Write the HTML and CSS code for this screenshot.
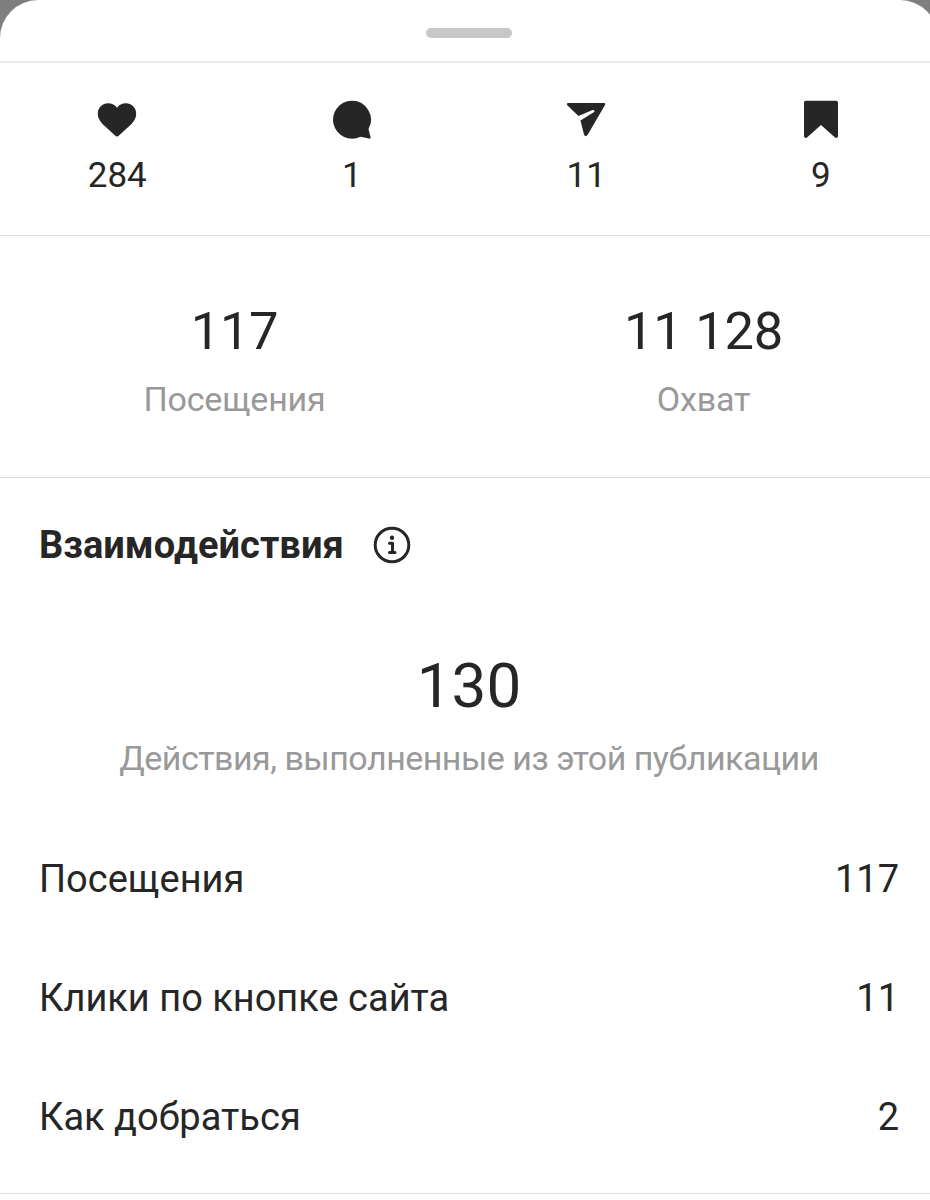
FILE: index.html
```
<!DOCTYPE html>
<html lang="ru">
<head>
    <meta charset="UTF-8">
    <meta name="viewport" content="width=device-width, initial-scale=1.0">
    <title>Статистика</title>
    <link rel="stylesheet" href="styles.css">
</head>
<body>
    <div class="sheet">
        <div class="sheet-top">
            <div class="handle"></div>
        </div>
        <div class="counters">
            <div class="counter">
                <svg width="40" height="40" viewBox="0 0 40 40"><path d="M20 36.500Q19.200 36.500 17.500 35L5.500 24C2.500 21 .800 17.500 .800 13.800C.800 7.500 5.500 3.300 11 3.300C15 3.300 18 5 20 7.800C22 5 25 3.300 29 3.300C34.500 3.300 39.200 7.500 39.200 13.800C39.200 17.500 37.500 21 34.500 24L22.500 35Q20.800 36.500 20 36.500Z"/></svg>
                <span>284</span>
            </div>
            <div class="counter">
                <svg width="40" height="40" viewBox="0 0 40 40"><path d="M19.500 .700A19 19 0 1 0 28.500 36.700L37 38.600Q39 39 38.500 37L36.500 29A19 19 0 0 0 19.500 .700Z"/></svg>
                <span>1</span>
            </div>
            <div class="counter">
                <svg width="40" height="40" viewBox="0 0 40 40"><path d="M2 3H38Q40 3.200 39 5L21.500 35Q19.300 37.500 18 34.500L14.500 20.500L28.500 11.700Q28.500 9.500 26.500 10L12.500 16L1.500 5.500Q0 3.500 2 3Z"/></svg>
                <span>11</span>
            </div>
            <div class="counter">
                <svg width="40" height="40" viewBox="0 0 40 40"><path d="M4.800 .700H35.200Q37 .700 37 2.500V36Q36.700 38.800 34 37.500L20 25L6 37.500Q3.300 38.800 3 36V2.500Q3 .700 4.800 .700Z"/></svg>
                <span>9</span>
            </div>
        </div>
        <div class="totals">
            <div class="total">
                <div class="total-value">117</div>
                <div class="total-label">Посещения</div>
            </div>
            <div class="total">
                <div class="total-value">11 128</div>
                <div class="total-label">Охват</div>
            </div>
        </div>
        <div class="interactions">
            <h2>
                <span>Взаимодействия</span>
                <svg width="38" height="38" viewBox="0 0 38 38"><circle cx="19" cy="19" r="16.800" fill="none" stroke="#262626" stroke-width="3"/><circle cx="19" cy="11.800" r="2.200"/><path d="M16.500 17.200H19.500V26.500M16.500 26.500H22" fill="none" stroke="#262626" stroke-width="3" stroke-linecap="round" stroke-linejoin="round"/></svg>
            </h2>
            <div class="summary">
                <div class="summary-value">130</div>
                <div class="summary-label">Действия, выполненные из этой публикации</div>
            </div>
            <div class="row"><span>Посещения</span><span>117</span></div>
            <div class="row"><span>Клики по кнопке сайта</span><span>11</span></div>
            <div class="row"><span>Как добраться</span><span>2</span></div>
        </div>
    </div>
</body>
</html>
```
FILE: styles.css
```
* {
    box-sizing: border-box;
}
body {
    margin: 0;
    width: 930px;
    height: 1200px;
    overflow: hidden;
    background-color: #7f7f7f;
    color: #262626;
    font-family: Roboto, sans-serif;
}
.sheet {
    width: 938px;
    height: 1200px;
    background-color: #fff;
    border-radius: 38px 38px 0 0;
}
.sheet-top {
    height: 63px;
    padding-top: 28px;
    border-bottom: 2px solid #eaeaea;
}
.handle {
    width: 86px;
    height: 10px;
    margin: 0 auto;
    border-radius: 5px;
    background-color: #c7c7c7;
}
.counters {
    display: flex;
    height: 173px;
    padding-top: 37px;
    border-bottom: 1px solid #dbdbdb;
}
.counter {
    flex: 1;
    display: flex;
    flex-direction: column;
    align-items: center;
    font-size: 35px;
    line-height: 40px;
}
.counter span {
    margin-top: 16px;
}
svg {
    display: block;
    fill: #262626;
}
.totals {
    display: flex;
    height: 242px;
    padding-top: 65px;
    border-bottom: 1px solid #dbdbdb;
    text-align: center;
}
.total {
    flex: 1;
}
.total-value {
    font-size: 52.500px;
    line-height: 60px;
    letter-spacing: -0.300px;
}
.total-label {
    margin-top: 18px;
    font-size: 34px;
    line-height: 40px;
    letter-spacing: -0.200px;
    color: #999;
}
.interactions {
    height: 716px;
    padding: 44px 39px 0;
    border-bottom: 1px solid #dbdbdb;
}
h2 {
    display: flex;
    align-items: center;
    gap: 29px;
    margin: 0;
    font-size: 38px;
    line-height: 46px;
}
h2 span {
    letter-spacing: 0.050px;
}
.summary {
    height: 252px;
    padding-top: 83px;
    text-align: center;
}
.summary-value {
    font-size: 62px;
    line-height: 70px;
}
.summary-label {
    margin-top: 17px;
    font-size: 34px;
    line-height: 40px;
    letter-spacing: -0.500px;
    color: #999;
    white-space: nowrap;
}
.row {
    display: flex;
    justify-content: space-between;
    height: 119px;
    padding-top: 37px;
    font-size: 38px;
    line-height: 44px;
}
```
